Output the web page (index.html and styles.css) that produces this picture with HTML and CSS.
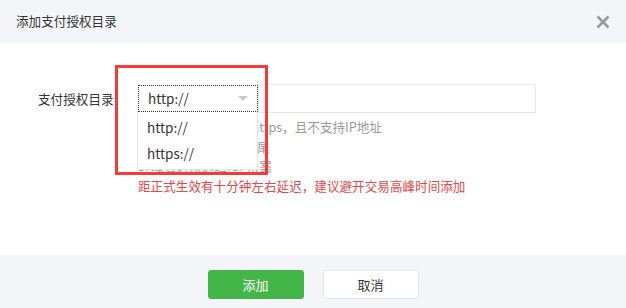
FILE: index.html
```html
<!DOCTYPE html>
<html lang="zh-CN">
<head>
    <meta charset="UTF-8">
    <meta name="viewport" content="width=device-width, initial-scale=1.0">
    <title>添加支付授权目录</title>
    <link rel="stylesheet" href="styles.css">
</head>
<body>

    <div class="dialog">
        <!-- Header -->
        <div class="dialog-hd">
            <h3 class="dialog-title">添加支付授权目录</h3>
            <a class="dialog-close" href="#" title="关闭">
                <svg width="14" height="14" viewBox="0 0 14 14">
                    <path d="M1.5 1.5 L12.5 12.5 M12.5 1.5 L1.5 12.5" stroke="#9a9a9a" stroke-width="2.6" fill="none"/>
                </svg>
            </a>
        </div>

        <!-- Body -->
        <div class="dialog-bd">
            <div class="form-row">
                <label class="form-label">支付授权目录</label>
                <div class="form-ctrl">
                    <div class="input-group">
                        <div class="select">
                            <span class="select-value">http://</span>
                            <i class="select-arrow"></i>
                            <ul class="select-opts">
                                <li>http://</li>
                                <li>https://</li>
                            </ul>
                        </div>
                        <input type="text" class="input">
                    </div>
                    <ul class="tips">
                        <li>1. 目录必须以http或https，且不支持IP地址</li>
                        <li>2. 需以左斜杠“/”结尾</li>
                        <li>3. 域名必须通过ICP备案</li>
                        <li class="tips-warn">距正式生效有十分钟左右延迟，建议避开交易高峰时间添加</li>
                    </ul>
                </div>
            </div>
            <!-- annotation frame -->
            <div class="mark"></div>
        </div>

        <!-- Footer -->
        <div class="dialog-ft">
            <button class="btn btn-primary">添加</button>
            <button class="btn btn-default">取消</button>
        </div>
    </div>

</body>
</html>
```

FILE: styles.css
```css
* {
    margin: 0;
    padding: 0;
    box-sizing: border-box;
}
body {
    font-family: "Microsoft YaHei", "Noto Sans CJK SC", sans-serif;
    font-size: 12.6px;
    color: #353535;
    background: #fff;
    width: 626px;
    height: 308px;
    overflow: hidden;
}
ul {
    list-style: none;
}

/* Dialog */
.dialog {
    display: flex;
    flex-direction: column;
    height: 308px;
}

.dialog-hd {
    height: 43px;
    background: #f4f5f9;
    display: flex;
    align-items: center;
    justify-content: space-between;
    padding: 0 16px;
}

.dialog-title {
    font-size: 12.6px;
    font-weight: normal;
    line-height: 20px;
    margin-top: -2px;
}

.dialog-close {
    display: flex;
    width: 14px;
    height: 14px;
}

.dialog-bd {
    position: relative;
    height: 212px;
    padding: 41px 0 0 38px;
}

/* Form */
.form-row {
    display: flex;
}

.form-label {
    width: 100px;
    line-height: 29px;
}

.input-group {
    display: flex;
    align-items: center;
    height: 29px;
}

.select {
    position: relative;
    width: 120px;
    height: 27px;
    border: 1px dotted #333;
    display: flex;
    align-items: center;
    padding-left: 9px;
    font-size: 13.5px;
    line-height: 20px;
    background: #fff;
    z-index: 2;
}

.select-value {
    flex: 1;
    margin-top: -1px;
}

.select-arrow {
    width: 0;
    height: 0;
    border-left: 5px solid transparent;
    border-right: 5px solid transparent;
    border-top: 5px solid #c9c9c9;
    margin-right: 9px;
}

.select-opts {
    position: absolute;
    top: 26px;
    left: -2px;
    width: 121px;
    padding: 2px 0 3px;
    background: #fff;
    border: 1px solid #e4e4e4;
    border-top: none;
}

.select-opts li {
    height: 26px;
    line-height: 26px;
    padding-left: 9px;
}

.input {
    width: 278px;
    height: 29px;
    border: 1px solid #e7e7eb;
    outline: none;
    font: inherit;
}

.tips {
    margin-top: 4px;
    color: #9a9a9a;
    line-height: 19.7px;
}

.tips-warn {
    color: #e8474a;
}

/* Red highlight frame */
.mark {
    position: absolute;
    left: 115px;
    top: 22px;
    width: 153px;
    height: 110px;
    border: 3px solid #f23c3c;
    z-index: 3;
}

/* Footer */
.dialog-ft {
    flex: 1;
    background: #f4f5f9;
    display: flex;
    justify-content: center;
    gap: 19px;
    padding-top: 15px;
}

.btn {
    width: 96px;
    height: 29px;
    border-radius: 3px;
    font-family: inherit;
    font-size: 13px;
    cursor: pointer;
}

.btn-primary {
    background: #44b549;
    border: 1px solid #44b549;
    color: #fff;
}

.btn-default {
    background: #fff;
    border: 1px solid #e4e8eb;
    color: #353535;
}
```
